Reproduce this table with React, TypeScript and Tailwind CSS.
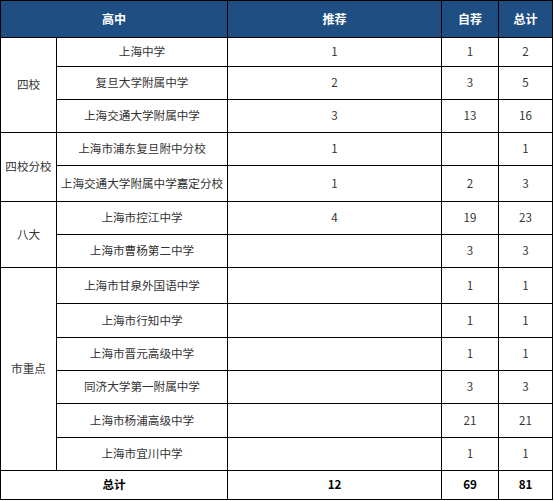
import React from "react";

const font = { fontFamily: '"Noto Sans CJK SC", "Noto Sans", sans-serif' };

type Row = { name: string; a: string; b: string; c: string };

const groups: { label: string; rows: Row[] }[] = [
  {
    label: "四校",
    rows: [
      { name: "上海中学", a: "1", b: "1", c: "2" },
      { name: "复旦大学附属中学", a: "2", b: "3", c: "5" },
      { name: "上海交通大学附属中学", a: "3", b: "13", c: "16" },
    ],
  },
  {
    label: "四校分校",
    rows: [
      { name: "上海市浦东复旦附中分校", a: "1", b: "", c: "1" },
      { name: "上海交通大学附属中学嘉定分校", a: "1", b: "2", c: "3" },
    ],
  },
  {
    label: "八大",
    rows: [
      { name: "上海市控江中学", a: "4", b: "19", c: "23" },
      { name: "上海市曹杨第二中学", a: "", b: "3", c: "3" },
    ],
  },
  {
    label: "市重点",
    rows: [
      { name: "上海市甘泉外国语中学", a: "", b: "1", c: "1" },
      { name: "上海市行知中学", a: "", b: "1", c: "1" },
      { name: "上海市晋元高级中学", a: "", b: "1", c: "1" },
      { name: "同济大学第一附属中学", a: "", b: "3", c: "3" },
      { name: "上海市杨浦高级中学", a: "", b: "21", c: "21" },
      { name: "上海市宜川中学", a: "", b: "1", c: "1" },
    ],
  },
];

const spanClass: Record<number, string> = {
  2: "row-span-2",
  3: "row-span-3",
  6: "row-span-6",
};

const cell =
  "bg-white flex items-center justify-center text-[11.6px] text-[#333] leading-none";
const head =
  "bg-[#1f4e82] flex items-center justify-center text-[12px] text-white font-bold leading-none";

export default function App() {
  return (
    <div className="bg-white w-[554px] h-[501px]" style={font}>
      <div className="inline-grid bg-black gap-px p-px grid-cols-[55px_170px_213px_56px_53px] grid-rows-[36px_28px_32px_32px_32px_35px_32px_32px_35px_33px_32px_32px_33px_32px_28px]">
        <div className={`${head} col-span-2`}>高中</div>
        <div className={head}>推荐</div>
        <div className={head}>自荐</div>
        <div className={head}>总计</div>
        {groups.map((g) =>
          g.rows.map((r, i) => (
            <React.Fragment key={r.name}>
              {i === 0 && (
                <div className={`${cell} ${spanClass[g.rows.length]}`}>
                  {g.label}
                </div>
              )}
              <div className={cell}>{r.name}</div>
              <div className={cell}>{r.a}</div>
              <div className={cell}>{r.b}</div>
              <div className={cell}>{r.c}</div>
            </React.Fragment>
          ))
        )}
        <div className={`${cell} col-span-2 font-bold text-black`}>总计</div>
        <div className={`${cell} font-bold text-black`}>12</div>
        <div className={`${cell} font-bold text-black`}>69</div>
        <div className={`${cell} font-bold text-black`}>81</div>
      </div>
    </div>
  );
}
